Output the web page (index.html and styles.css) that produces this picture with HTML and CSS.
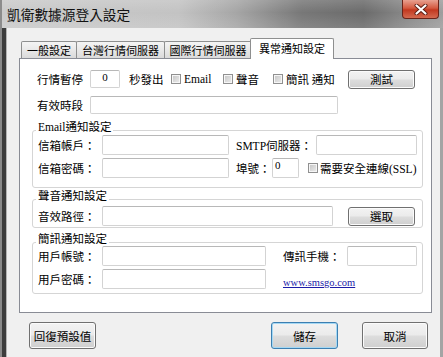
FILE: index.html
```html
<!DOCTYPE html>
<html lang="zh-Hant">
<head>
  <meta charset="UTF-8" />
  <meta name="viewport" content="width=device-width, initial-scale=1.0"/>
  <title>凱衛數據源登入設定</title>
  <link rel="stylesheet" href="styles.css">
</head>
<body>

  <div class="window">
    <div class="titlebar">
      <span class="title">凱衛數據源登入設定</span>
      <span class="close-btn">
        <svg width="14" height="11" viewBox="0 0 14 11">
          <path d="M2.5 1.5 L11.5 9.5 M11.5 1.5 L2.5 9.5" stroke="#5b1c12" stroke-width="4" stroke-linecap="round"/>
          <path d="M2.5 1.5 L11.5 9.5 M11.5 1.5 L2.5 9.5" stroke="#fff" stroke-width="2.2" stroke-linecap="round"/>
        </svg>
      </span>
    </div>

    <div class="frame">
      <div class="frame-left"></div>

      <div class="client">
        <div class="tabs">
          <div class="tab tab-general">一般設定</div>
          <div class="tab tab-tw">台灣行情伺服器</div>
          <div class="tab tab-intl">國際行情伺服器</div>
          <div class="tab active">異常通知設定</div>
        </div>

        <div class="panel">
          <!-- pause / notify options -->
          <div class="row row-top">
            <span class="lbl w53">行情暫停</span>
            <span class="field short w30 num">0</span>
            <span class="lbl sec">秒發出</span>
            <span class="check"></span>
            <span class="lbl opt-email">Email</span>
            <span class="check"></span>
            <span class="lbl opt-sound">聲音</span>
            <span class="check"></span>
            <span class="lbl opt-sms">簡訊 通知</span>
            <button class="btn btn-small">測試</button>
          </div>

          <div class="row row-top row-period">
            <span class="lbl w53">有效時段</span>
            <span class="field short w248"></span>
          </div>

          <fieldset class="group group-email">
            <legend>Email通知設定</legend>
            <div class="row grow first">
              <span class="lbl w64">信箱帳戶：</span>
              <span class="field w127"></span>
              <span class="lbl smtp">SMTP伺服器：</span>
              <span class="field w101"></span>
            </div>
            <div class="row grow next">
              <span class="lbl w64">信箱密碼：</span>
              <span class="field w127"></span>
              <span class="lbl port">埠號：</span>
              <span class="field w27 port-val">0</span>
              <span class="check ssl-check"></span>
              <span class="lbl ssl">需要安全連線(SSL)</span>
            </div>
          </fieldset>

          <fieldset class="group group-sound">
            <legend>聲音通知設定</legend>
            <div class="row grow first">
              <span class="lbl w64">音效路徑：</span>
              <span class="field w231"></span>
              <button class="btn btn-small btn-pick">選取</button>
            </div>
          </fieldset>

          <fieldset class="group group-sms">
            <legend>簡訊通知設定</legend>
            <div class="row grow first">
              <span class="lbl w64">用戶帳號：</span>
              <span class="field w164"></span>
              <span class="lbl phone">傳訊手機：</span>
              <span class="field w70"></span>
            </div>
            <div class="row grow next">
              <span class="lbl w64">用戶密碼：</span>
              <span class="field w164"></span>
              <a class="link" href="#">www.smsgo.com</a>
            </div>
          </fieldset>
        </div>

        <div class="footer">
          <button class="btn btn-reset">回復預設值</button>
          <button class="btn btn-save">儲存</button>
          <button class="btn btn-cancel">取消</button>
        </div>
      </div>

      <div class="frame-right"></div>
    </div>
  </div>

</body>
</html>
```

FILE: styles.css
```css
* {
  box-sizing: border-box;
}

body, html {
  margin: 0;
  padding: 0;
  width: 443px;
  height: 357px;
  overflow: hidden;
  font-family: "Liberation Serif", "Noto Sans CJK TC", serif;
  font-size: 11.5px;
  color: #000;
  background: #f0f0f0;
}

.window {
  display: flex;
  flex-direction: column;
  height: 357px;
}

/* title bar */
.titlebar {
  height: 28px;
  flex-shrink: 0;
  display: flex;
  align-items: flex-start;
  border-left: 2px solid #8c8c8c;
  background:
    linear-gradient(to bottom, rgba(255,255,255,0.15), rgba(255,255,255,0) 45%, rgba(255,255,255,0.12)),
    linear-gradient(to right, #cacaca 0%, #c3c3c3 40%, #a6a6a6 53%, #777 68%, #6b6b6b 82%, #868686 91%, #9e9e9e 100%);
}

.title {
  font-family: "Noto Sans CJK TC", sans-serif;
  font-size: 13.7px;
  line-height: 19px;
  margin: 5px 0 0 5px;
  color: #111;
}

.close-btn {
  margin-left: auto;
  margin-right: 4px;
  width: 37px;
  height: 19px;
  display: flex;
  align-items: center;
  justify-content: center;
  border: 1px solid #6a2419;
  border-top: none;
  border-radius: 0 0 4px 4px;
  background: linear-gradient(#e8a190, #d45a40 45%, #c2381f 55%, #d46a50);
}

/* frame + client */
.frame {
  flex: 1;
  display: flex;
}

.frame-left {
  width: 7px;
  background: linear-gradient(to right, #8a8a8a 0 2px, #3d3d3d 2px 6px, #b4b4b4 6px 7px);
}

.frame-right {
  width: 3px;
  background: #a4a4a4;
}

.client {
  flex: 1;
  padding: 10px 0 0 12px;
}

/* tabs */
.tabs {
  display: flex;
  align-items: flex-end;
  height: 20px;
  padding-left: 2px;
}

.tab {
  height: 17px;
  margin-right: -1px;
  padding-top: 1px;
  border: 1px solid #8e8f8f;
  border-bottom: none;
  border-radius: 2px 2px 0 0;
  background: linear-gradient(#f4f4f4, #e8e8e8 50%, #dadada);
  font-family: "Noto Sans CJK TC", sans-serif;
  font-size: 11px;
  line-height: 15px;
  text-align: center;
  white-space: nowrap;
}

.tab-general { width: 56px; }
.tab-tw { width: 89px; }
.tab-intl { width: 88px; }

.tab.active {
  width: 84px;
  height: 21px;
  margin-left: -1px;
  margin-bottom: -1px;
  padding-top: 0;
  line-height: 19px;
  background: #fff;
  position: relative;
  z-index: 1;
}

/* panel */
.panel {
  width: 413px;
  height: 255px;
  padding: 10px 0 0 12px;
  border: 1px solid #898c95;
  background: #fff;
}

.row {
  display: flex;
  align-items: center;
  height: 20px;
  white-space: nowrap;
}

.row > * {
  flex-shrink: 0;
}

.row-top { padding-left: 5px; }
.row-period { margin-top: 6px; }

.lbl { display: block; }
.w53 { width: 53px; }
.w64 { width: 64px; }

.sec { width: 51px; padding-left: 9px; }
.opt-email { width: 42px; padding-left: 3px; }
.opt-sound { width: 40px; padding-left: 3px; }
.opt-sms { width: 65px; padding-left: 3px; }
.smtp { width: 87px; padding-left: 7px; }
.port { width: 43px; padding-left: 7px; }
.phone { width: 81px; padding-left: 17px; }
.ssl { padding-left: 2px; }

/* text boxes */
.field {
  display: block;
  height: 20px;
  border: 1px solid #d3d3d3;
  border-top-color: #b8b8b8;
  border-radius: 2px;
  background: #fff;
  font-size: 11px;
  line-height: 12px;
}

.field.short { height: 18px; }

.w27 { width: 27px; }
.w30 { width: 30px; }
.w70 { width: 70px; }
.w101 { width: 101px; }
.w127 { width: 127px; }
.w164 { width: 164px; }
.w231 { width: 231px; }
.w248 { width: 248px; }

.num { text-align: center; }
.port-val { padding-left: 2px; }

/* checkbox */
.check {
  display: block;
  width: 10px;
  height: 10px;
  border: 1px solid #909090;
  background: linear-gradient(135deg, #c4c4c4, #eeeeee);
  box-shadow: inset 0 0 0 1px #f6f6f6;
}

.ssl-check { margin-left: 9px; }

/* buttons */
.btn {
  display: block;
  padding: 0;
  border: 1px solid #707070;
  border-radius: 3px;
  background: linear-gradient(#f3f3f3 0%, #ebebeb 48%, #dddddd 52%, #cfcfcf 100%);
  box-shadow: inset 0 0 0 1px #fbfbfb;
  font-family: "Noto Sans CJK TC", sans-serif;
  font-size: 11.5px;
  color: #000;
}

.btn-small {
  width: 67px;
  height: 19px;
  line-height: 15px;
}

.row-top .btn-small { margin-left: 0; }
.btn-pick { margin-left: 15px; }

/* group boxes */
.group {
  width: 391px;
  min-width: 0;
  margin: 0;
  padding: 0 0 9px 0;
  border: 1px solid #d5d5d5;
  border-radius: 3px;
}

.group legend {
  margin-left: 3px;
  padding: 0 2px;
  height: 7px;
  line-height: 7px;
  position: relative;
  top: -3px;
}

.grow { padding-left: 5px; }

.group-email { margin-top: 12px; }
.group-email .first { margin-top: 1px; }
.group-email .next { margin-top: 3px; }

.group-sound { margin-top: 8px; padding-bottom: 1px; }
.group-sound .first { margin-top: 3px; }

.group-sms { margin-top: 11px; padding-bottom: 4px; }
.group-sms .next { margin-top: 3px; }

.link {
  align-self: flex-end;
  margin-left: 17px;
  font-size: 10.5px;
  line-height: 12px;
  color: #1c1ca8;
  text-decoration: underline;
}

/* bottom buttons */
.footer {
  display: flex;
  width: 413px;
  margin-top: 9px;
  padding: 0 4px 0 10px;
}

.footer .btn {
  width: 67px;
  height: 27px;
}

.btn-save {
  margin-left: auto;
  margin-right: 24px;
  border-color: #3c7fb1;
  box-shadow: inset 0 0 0 1px #a4d8f4;
}

.footer .btn-cancel { width: 66px; }
```
